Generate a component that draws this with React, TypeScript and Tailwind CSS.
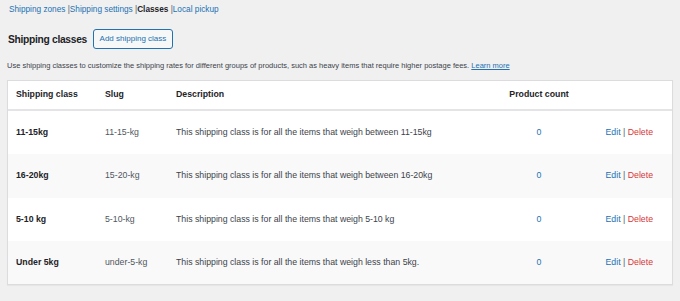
import React from 'react';

const rows = [
  { name: '11-15kg', slug: '11-15-kg', desc: 'This shipping class is for all the items that weigh between 11-15kg', count: 0 },
  { name: '16-20kg', slug: '15-20-kg', desc: 'This shipping class is for all the items that weigh between 16-20kg', count: 0 },
  { name: '5-10 kg', slug: '5-10-kg', desc: 'This shipping class is for all the items that weigh 5-10 kg', count: 0 },
  { name: 'Under 5kg', slug: 'under-5-kg', desc: 'This shipping class is for all the items that weigh less than 5kg.', count: 0 },
];

const cols = 'grid grid-cols-[89px_71px_335px_56px_1fr] items-center';

export default function App() {
  return (
    <div className="min-h-screen w-[680px] h-[301px] bg-[#f0f0f1] text-[#1d2327] font-['Liberation_Sans',Arial,sans-serif] overflow-hidden">
      <nav className="pl-[9px] pt-[3px] h-[16px] text-[8.25px] leading-[12px] flex items-center whitespace-pre">
        <a className="text-[#2271b1]">Shipping zones</a>
        <span className="text-[#50575e]"> |</span>
        <a className="text-[#2271b1]">Shipping settings</a>
        <span className="text-[#50575e]"> |</span>
        <span className="font-bold">Classes</span>
        <span className="text-[#50575e]"> |</span>
        <a className="text-[#2271b1]">Local pickup</a>
      </nav>

      <div className="flex items-center pl-[8px] mt-[13px] h-[20px] gap-[6px]">
        <h2 className="text-[10.25px] font-bold tracking-[-0.3px] pt-[2px]">Shipping classes</h2>
        <button className="h-[20px] w-[80px] border border-[#2271b1] rounded-[3px] bg-[#f6f7f7] text-[#2271b1] text-[8px]">
          Add shipping class
        </button>
      </div>

      <p className="pl-[7px] mt-[12px] text-[7.5px] leading-[10px] text-[#3c434a]">
        Use shipping classes to customize the shipping rates for different groups of products, such as heavy items that require higher postage fees.{' '}
        <a className="text-[#2271b1] underline">Learn more</a>
      </p>

      <div className="mx-[7px] mt-[9px] border border-[#dcdcde] bg-white text-[8.75px] shadow-[0_1px_1px_rgba(0,0,0,0.04)]">
        <div className={`${cols} h-[30px] border-b-2 border-[#e4e4e7] font-bold pl-[8px]`}>
          <div>Shipping class</div>
          <div>Slug</div>
          <div>Description</div>
          <div className="flex justify-center whitespace-nowrap">Product count</div>
          <div />
        </div>
        {rows.map((r, i) => (
          <div key={r.slug} className={`${cols} h-[43.25px] pl-[8px] ${i % 2 ? 'bg-[#f9f9f9]' : 'bg-white'}`}>
            <div className="font-bold">{r.name}</div>
            <div className="text-[#50575e]">{r.slug}</div>
            <div className="text-[#3c434a] whitespace-nowrap">{r.desc}</div>
            <div className="text-center text-[#2271b1]">{r.count}</div>
            <div className="text-right pr-[19px] whitespace-nowrap">
              <a className="text-[#2271b1]">Edit</a>
              <span className="text-[#50575e]"> | </span>
              <a className="text-[#d63638]">Delete</a>
            </div>
          </div>
        ))}
      </div>
    </div>
  );
}
